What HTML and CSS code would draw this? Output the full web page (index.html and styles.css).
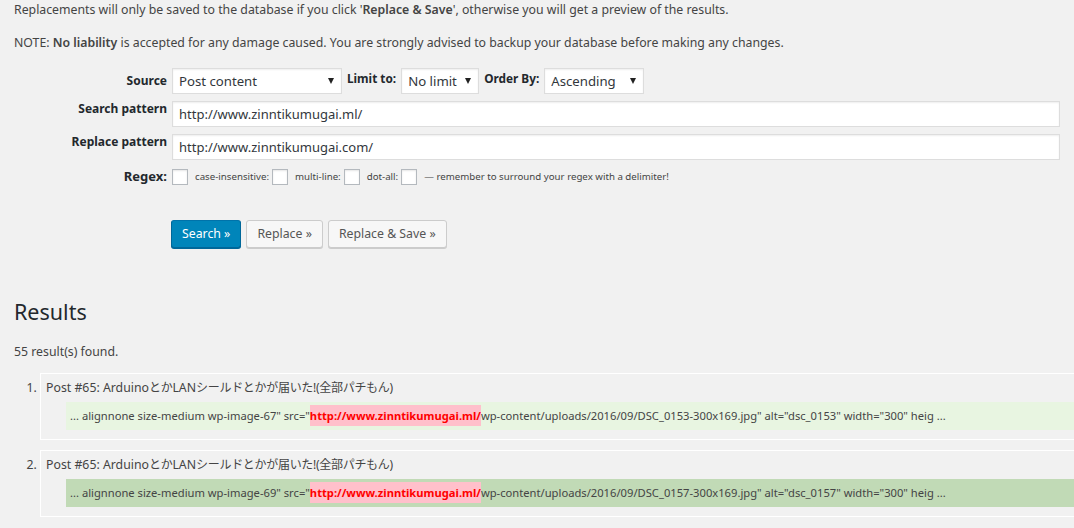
FILE: index.html
```html
<!DOCTYPE html>
<html lang="en">

<head>
  <meta charset="UTF-8" />
  <title>Search Regex</title>
  <link rel="stylesheet" href="styles.css">
</head>

<body>

  <p class="note">Replacements will only be saved to the database if you click '<strong>Replace &amp; Save</strong>', otherwise you will get a preview of the results.</p>
  <p class="note">NOTE: <strong>No liability</strong> is accepted for any damage caused. You are strongly advised to backup your database before making any changes.</p>

  <form class="search-form">
    <label class="label label-source" for="source">Source</label>
    <div class="field field-inline">
      <span class="select-wrap source-select">
        <select id="source" class="select">
          <option>Post content</option>
        </select>
      </span>
      <label class="inline-label" for="limit">Limit to:</label>
      <span class="select-wrap limit-select">
        <select id="limit" class="select">
          <option>No limit</option>
        </select>
      </span>
      <label class="inline-label" for="order">Order By:</label>
      <span class="select-wrap order-select">
        <select id="order" class="select">
          <option>Ascending</option>
        </select>
      </span>
    </div>

    <label class="label" for="search">Search pattern</label>
    <div class="field">
      <input type="text" class="input" id="search" value="http://www.zinntikumugai.ml/">
    </div>

    <label class="label" for="replace">Replace pattern</label>
    <div class="field">
      <input type="text" class="input" id="replace" value="http://www.zinntikumugai.com/">
    </div>

    <label class="label label-regex" for="regex">Regex:</label>
    <div class="field field-inline regex-row">
      <input type="checkbox" class="check" id="regex">
      <label class="small" for="ci">case-insensitive:</label>
      <input type="checkbox" class="check" id="ci">
      <label class="small" for="ml">multi-line:</label>
      <input type="checkbox" class="check" id="ml">
      <label class="small" for="da">dot-all:</label>
      <input type="checkbox" class="check" id="da">
      <span class="small">— remember to surround your regex with a delimiter!</span>
    </div>

    <div class="buttons">
      <button type="button" class="button primary">Search »</button>
      <button type="button" class="button">Replace »</button>
      <button type="button" class="button">Replace &amp; Save »</button>
    </div>
  </form>

  <h2 class="results-title">Results</h2>
  <p class="count">55 result(s) found.</p>

  <ol class="results">
    <li class="result">
      <div class="result-title">Post #65: Arduino<span class="jp">とか</span>LAN<span class="jp">シールドとかが届いた!(全部パチもん)</span></div>
      <div class="context">... alignnone size-medium wp-image-67" src="<span class="match">http://www.zinntikumugai.ml/</span>wp-content/uploads/2016/09/DSC_0153-300x169.jpg" alt="dsc_0153" width="300" heig ...</div>
    </li>
    <li class="result">
      <div class="result-title">Post #65: Arduino<span class="jp">とか</span>LAN<span class="jp">シールドとかが届いた!(全部パチもん)</span></div>
      <div class="context hover">... alignnone size-medium wp-image-69" src="<span class="match">http://www.zinntikumugai.ml/</span>wp-content/uploads/2016/09/DSC_0157-300x169.jpg" alt="dsc_0157" width="300" heig ...</div>
    </li>
  </ol>

</body>

</html>
```

FILE: styles.css
```css
body {
  background-color: #f1f1f1;
  color: #444;
  font-family: "Noto Sans", "Noto Sans CJK JP", sans-serif;
  font-size: 12.3px;
  line-height: 19.5px;
  margin: 0;
  padding: 0 14px;
  overflow: hidden;
}

.note {
  margin: 0 0 13px;
}

.note strong {
  font-weight: 600;
}

.search-form {
  display: grid;
  grid-template-columns: 153px 888px;
  column-gap: 5px;
  row-gap: 7px;
  margin-top: 16px;
}

.label {
  font-size: 12px;
  font-weight: 700;
  text-align: right;
  line-height: 16px;
  color: #23282d;
}

.label-source {
  padding-top: 5px;
}

.label-regex {
  font-size: 13px;
  padding-top: 1px;
}

.field-inline {
  display: flex;
  align-items: center;
  gap: 5px;
}

.inline-label {
  font-size: 11.8px;
  font-weight: 700;
  color: #23282d;
  padding-bottom: 4px;
}

.select-wrap {
  position: relative;
  display: inline-block;
  height: 26px;
}

.select-wrap::after {
  content: "";
  position: absolute;
  right: 8px;
  top: 10px;
  border-left: 3.5px solid transparent;
  border-right: 3.5px solid transparent;
  border-top: 6px solid #222;
  pointer-events: none;
}

.select {
  appearance: none;
  -webkit-appearance: none;
  box-sizing: border-box;
  height: 26px;
  border: 1px solid #ddd;
  box-shadow: inset 0 1px 2px rgba(0, 0, 0, 0.07);
  background-color: #fff;
  color: #32373c;
  font-family: inherit;
  font-size: 13.2px;
  padding: 0 6px;
  margin: 0;
}

.source-select .select {
  width: 170px;
}

.limit-select .select {
  width: 78px;
}

.order-select .select {
  width: 100px;
}

.input {
  box-sizing: border-box;
  width: 100%;
  height: 26px;
  border: 1px solid #ddd;
  box-shadow: inset 0 1px 2px rgba(0, 0, 0, 0.07);
  background-color: #fff;
  color: #32373c;
  font-family: inherit;
  font-size: 13px;
  padding: 0 6px;
  margin: 0;
}

.regex-row {
  gap: 7px;
  height: 20px;
}

.check {
  appearance: none;
  -webkit-appearance: none;
  width: 16px;
  height: 16px;
  margin: 0;
  border: 1px solid #b4b9be;
  background-color: #fff;
  box-shadow: inset 0 1px 2px rgba(0, 0, 0, 0.1);
}

.small {
  font-size: 9.7px;
}

.regex-row .small + .check {
  margin-left: -4px;
}

.buttons {
  grid-column: 2;
  display: flex;
  gap: 5px;
  margin: 26px 0 0 -1px;
}

.button {
  height: 28px;
  padding: 0 10px 1px;
  border: 1px solid #ccc;
  border-radius: 3px;
  background-color: #f7f7f7;
  box-shadow: 0 1px 0 #ccc;
  color: #555;
  font-family: inherit;
  font-size: 12.3px;
  cursor: pointer;
}

.button.primary {
  background-color: #0085ba;
  border-color: #0073aa #006799 #006799;
  box-shadow: 0 1px 0 #006799;
  color: #fff;
}

.results-title {
  font-size: 21.5px;
  font-weight: 400;
  color: #23282d;
  margin: 49px 0 0;
  line-height: 29px;
}

.count {
  margin: 16px 0 0;
}

.results {
  margin: 11px -40px 0 0;
  padding-left: 26px;
}

.result {
  border: 1px solid #fff;
  padding: 4px 0 9px 5px;
  margin-bottom: 10px;
}

.result-title {
  line-height: 19px;
}

.result-title .jp {
  font-size: 12px;
  letter-spacing: -0.3px;
}

.context {
  margin: 5px 0 0 20px;
  padding: 5px 4px;
  line-height: 18px;
  font-size: 11.2px;
  background-color: #e8f5e1;
}

.context.hover {
  background-color: #c1dab6;
}

.match {
  background-color: #ffc0cb;
  color: #ff0000;
  font-weight: 700;
  padding: 3px 0;
}
```
